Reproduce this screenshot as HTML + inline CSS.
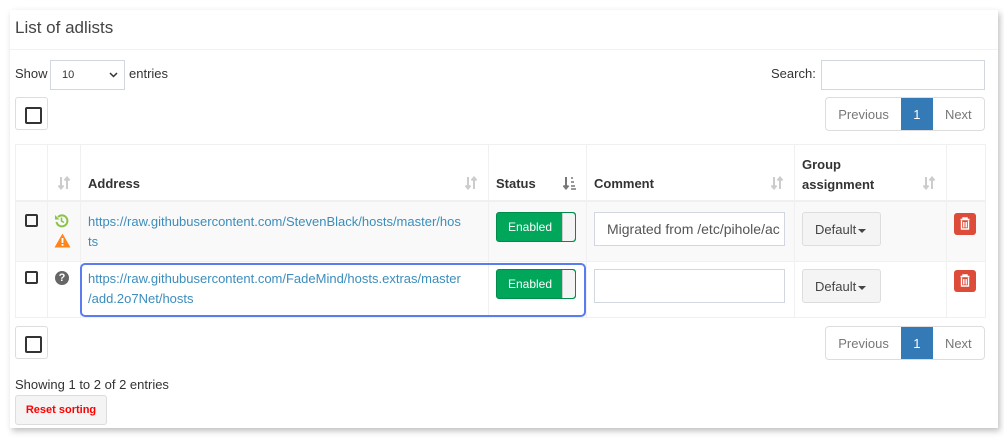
<!DOCTYPE html>
<html><head><meta charset="utf-8"><style>
*{box-sizing:border-box;margin:0;padding:0}
body{width:1004px;height:443px;background:#fff;font-family:"Liberation Sans",sans-serif;font-size:13px;color:#333;position:relative;overflow:hidden}
.card{position:absolute;left:10px;top:10px;width:988px;height:418px;background:#fff;box-shadow:2px 3px 6px rgba(0,0,0,.25)}
.a{position:absolute}
.cb{position:absolute;width:33px;height:33px;border:1px solid #ddd;border-radius:3px;background:#fff}
.cb:after{content:"";position:absolute;left:9px;top:9px;width:13px;height:13px;border:2px solid #333;border-radius:2px}
.pg{position:absolute;height:34px;border:1px solid #ddd;border-radius:4px;display:flex;overflow:hidden;font-size:13px;color:#777}
.pg div{display:flex;align-items:center;justify-content:center}
.sm{position:absolute;width:13px;height:13px;border:2px solid #333;border-radius:2px}
.link{color:#3c8dbc;line-height:20px}
.en{position:absolute;width:80px;height:30px;background:#00a65a;border:1px solid #008d4c;border-radius:3px;color:#fff;font-size:12px}
.en span{position:absolute;left:0;width:66px;top:7px;text-align:center}
.en i{position:absolute;right:0;top:0;width:13px;height:28px;background:#f4f4f4;border-left:1px solid #ccc;border-radius:0 3px 3px 0}
.inp{position:absolute;width:191px;height:34px;border:1px solid #d2d6de;background:#fff;font-size:14px;color:#555;padding:8px 12px;white-space:nowrap;overflow:hidden}
.dd{position:absolute;width:79px;height:34px;background:#f4f4f4;border:1px solid #ddd;border-radius:3px;font-size:13px;color:#444;padding:9px 0 0 12px;white-space:nowrap}
.dd b{display:inline-block;width:0;height:0;border-left:4px solid transparent;border-right:4px solid transparent;border-top:4px solid #444;vertical-align:middle;margin-left:2px}
.del{position:absolute;width:22px;height:22px;background:#dd4b39;border-radius:3px}
.hl{position:absolute;background:#f0f0f0}
.srt{position:absolute}
</style></head><body>
<div class="card"></div>
<div class="a" style="left:15px;top:18px;font-size:17px;color:#444">List of adlists</div>
<div class="a" style="left:10px;top:49px;width:988px;height:1px;background:#f2f2f2"></div>
<div class="a" style="left:15px;top:66px;font-size:13px">Show</div>
<div class="a" style="left:50px;top:60px;width:75px;height:30px;border:1px solid #d2d6de;font-size:11px;padding:8px 11px">10<svg style="position:absolute;right:6px;top:11px" width="9" height="6"><path d="M1 1L4.5 4.5L8 1" stroke="#333" stroke-width="1.5" fill="none"/></svg></div>
<div class="a" style="left:129px;top:66px">entries</div>
<div class="a" style="left:771px;top:66px">Search:</div>
<div class="a" style="left:821px;top:60px;width:164px;height:30px;border:1px solid #d2d6de"></div>
<div class="cb" style="left:15px;top:97px"></div>
<div class="pg" style="left:825px;top:97px;width:160px"><div style="width:76px">Previous</div><div style="width:32px;background:#337ab7;color:#fff">1</div><div style="width:52px">Next</div></div>

<div class="a" style="left:15px;top:144px;width:971px;height:174px;border:1px solid #f0f0f0"></div>
<div class="a" style="left:16px;top:202px;width:969px;height:59px;background:#f9f9f9"></div>
<div class="hl" style="left:15px;top:200px;width:971px;height:2px"></div>
<div class="hl" style="left:15px;top:261px;width:971px;height:1px"></div>
<div class="hl" style="left:47px;top:144px;width:1px;height:174px"></div>
<div class="hl" style="left:80px;top:144px;width:1px;height:174px"></div>
<div class="hl" style="left:488px;top:144px;width:1px;height:174px"></div>
<div class="hl" style="left:586px;top:144px;width:1px;height:174px"></div>
<div class="hl" style="left:794px;top:144px;width:1px;height:174px"></div>
<div class="hl" style="left:946px;top:144px;width:1px;height:174px"></div>

<svg class="srt" style="left:58px;top:176px" width="12" height="14"><path d="M3 1V12M0.5 9.5L3 12.5L5.5 9.5M9 13V2M6.5 4.5L9 1.5L11.5 4.5" stroke="#ccc" stroke-width="2" fill="none"/></svg>
<div class="a" style="left:88px;top:176px;font-weight:bold">Address</div>
<svg class="srt" style="left:465px;top:176px" width="12" height="14"><path d="M3 1V12M0.5 9.5L3 12.5L5.5 9.5M9 13V2M6.5 4.5L9 1.5L11.5 4.5" stroke="#ccc" stroke-width="2" fill="none"/></svg>
<div class="a" style="left:496px;top:176px;font-weight:bold">Status</div>
<svg class="srt" style="left:563px;top:176px" width="14" height="14"><path d="M3 1V12M0.5 9.5L3 12.5L5.5 9.5" stroke="#777" stroke-width="2" fill="none"/><rect x="8" y="1" width="2" height="2" fill="#999"/><rect x="8" y="5" width="3" height="2" fill="#999"/><rect x="8" y="9" width="4" height="2" fill="#999"/><rect x="8" y="12" width="5" height="2" fill="#999"/></svg>
<div class="a" style="left:594px;top:176px;font-weight:bold">Comment</div>
<svg class="srt" style="left:771px;top:176px" width="12" height="14"><path d="M3 1V12M0.5 9.5L3 12.5L5.5 9.5M9 13V2M6.5 4.5L9 1.5L11.5 4.5" stroke="#ccc" stroke-width="2" fill="none"/></svg>
<div class="a" style="left:802px;top:155px;font-weight:bold;line-height:20px">Group<br>assignment</div>
<svg class="srt" style="left:923px;top:176px" width="12" height="14"><path d="M3 1V12M0.5 9.5L3 12.5L5.5 9.5M9 13V2M6.5 4.5L9 1.5L11.5 4.5" stroke="#ccc" stroke-width="2" fill="none"/></svg>

<div class="sm" style="left:25px;top:214px"></div>
<svg class="a" style="left:54px;top:213px" width="15" height="15"><path d="M4 4A5.5 5.5 0 1 1 2.5 9" stroke="#8bc34a" stroke-width="2" fill="none"/><path d="M1 2V6.5H5.5Z" fill="#8bc34a"/><path d="M7.5 4.5V8L10 9.5" stroke="#8bc34a" stroke-width="1.6" fill="none"/></svg>
<svg class="a" style="left:54px;top:233px" width="17" height="15"><path d="M8.5 0.5L16.5 14.5H0.5Z" fill="#ff851b"/><rect x="7.6" y="5" width="1.8" height="5" fill="#fff"/><rect x="7.6" y="11" width="1.8" height="1.8" fill="#fff"/></svg>
<div class="a link" style="left:88px;top:212px;width:392px">https://raw.githubusercontent.com/StevenBlack/hosts/master/hos<br>ts</div>
<div class="en" style="left:496px;top:212px"><span>Enabled</span><i></i></div>
<div class="inp" style="left:594px;top:212px">Migrated from /etc/pihole/ac</div>
<div class="dd" style="left:802px;top:212px">Default<b></b></div>
<div class="del" style="left:954px;top:213px"></div>
<svg class="a" style="left:954px;top:213px" width="22" height="22"><path d="M6.5 6.5H15.5M9 6.5V5H13V6.5M7.5 7.5V16H14.5V7.5M9.8 9V14.5M12.2 9V14.5" stroke="#fff" stroke-width="1.4" fill="none"/></svg>

<div class="sm" style="left:25px;top:271px"></div>
<div class="a" style="left:55px;top:271px;width:14px;height:14px;border-radius:50%;background:#666;color:#fff;font-size:11px;font-weight:bold;text-align:center;line-height:14px">?</div>
<div class="a" style="left:80px;top:263px;width:506px;height:54px;border:2.5px solid #5a7cf0;border-radius:5px"></div>
<div class="a link" style="left:88px;top:269px;width:392px">https://raw.githubusercontent.com/FadeMind/hosts.extras/master<br>/add.2o7Net/hosts</div>
<div class="en" style="left:496px;top:269px"><span>Enabled</span><i></i></div>
<div class="inp" style="left:594px;top:269px"></div>
<div class="dd" style="left:802px;top:269px">Default<b></b></div>
<div class="del" style="left:954px;top:270px"></div>
<svg class="a" style="left:954px;top:270px" width="22" height="22"><path d="M6.5 6.5H15.5M9 6.5V5H13V6.5M7.5 7.5V16H14.5V7.5M9.8 9V14.5M12.2 9V14.5" stroke="#fff" stroke-width="1.4" fill="none"/></svg>

<div class="cb" style="left:15px;top:326px"></div>
<div class="pg" style="left:825px;top:326px;width:160px"><div style="width:76px">Previous</div><div style="width:32px;background:#337ab7;color:#fff">1</div><div style="width:52px">Next</div></div>
<div class="a" style="left:15px;top:377px">Showing 1 to 2 of 2 entries</div>
<div class="a" style="left:15px;top:395px;width:92px;height:30px;background:#f4f4f4;border:1px solid #ddd;border-radius:3px;color:#f00;font-weight:bold;font-size:11px;text-align:center;line-height:28px">Reset sorting</div>
</body></html>
